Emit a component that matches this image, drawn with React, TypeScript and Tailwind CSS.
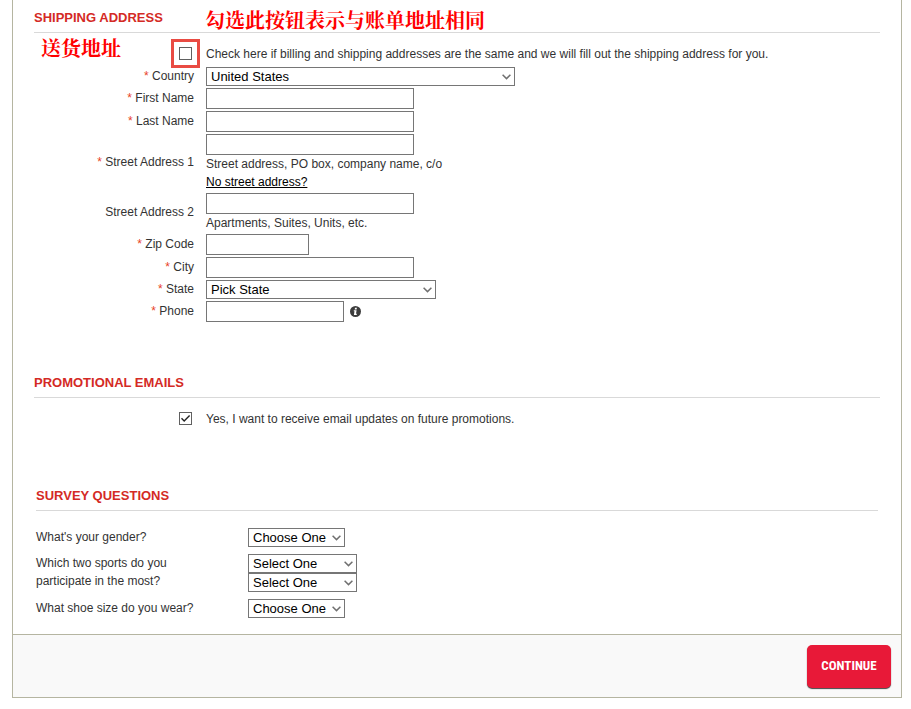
import { useState } from "react";

const inputClass = "h-[21px] border border-[#767676] bg-white px-1 text-[13px] text-black rounded-none focus:outline-none focus:border-black";
const headingClass = "border-b border-[#d9d9d9] pb-[5px] text-[13px] leading-[18px] font-bold text-[#d42a25]";
const noteClass = "absolute font-['Noto_Serif_CJK_SC','Noto_Sans_CJK_SC',serif] text-[20px] leading-6 font-bold whitespace-nowrap text-[#f00]";

function Select({ id, label, options, className }: { id: string; label?: string; options: string[]; className: string }) {
  return (
    <div className={`relative max-w-full ${className}`}>
      <select
        id={id}
        aria-label={label}
        className="block h-[19px] w-full appearance-none border border-[#767676] bg-white pl-1 text-[13px] leading-[17px] text-black"
      >
        {options.map((o) => (
          <option key={o}>{o}</option>
        ))}
      </select>
      <svg className="pointer-events-none absolute top-[7px] right-1 h-[6px] w-[9px]" viewBox="0 0 9 6" fill="none" stroke="#707070" strokeWidth={1.5}>
        <path d="M0.6 0.8L4.5 4.6L8.4 0.8" />
      </svg>
    </div>
  );
}

function Checkbox({ id, checked, onChange }: { id: string; checked: boolean; onChange: (v: boolean) => void }) {
  return (
    <span className="relative block h-[13px] w-[13px]">
      <input
        id={id}
        type="checkbox"
        checked={checked}
        onChange={(e) => onChange(e.target.checked)}
        className="block h-[13px] w-[13px] appearance-none border border-[#606060] bg-white"
      />
      {checked && (
        <svg className="pointer-events-none absolute inset-0 h-[13px] w-[13px]" viewBox="0 0 13 13" fill="none" stroke="#222" strokeWidth={1.4}>
          <path d="M2.5 6.3L5.2 9L10.6 3.6" />
        </svg>
      )}
    </span>
  );
}

function Row({ id, label, required = true, children }: { id: string; label: string; required?: boolean; children: React.ReactNode }) {
  return (
    <div className="flex items-center gap-3">
      <label htmlFor={id} className="-my-1 w-40 shrink-0 pb-[2px] text-right">
        {required && <span className="text-[#e8421f]">* </span>}
        {label}
      </label>
      <div className="min-w-0 flex-1">{children}</div>
    </div>
  );
}

export default function App() {
  const [same, setSame] = useState(false);
  const [promo, setPromo] = useState(true);

  return (
    <div className="bg-white pr-[9px] pb-[11px] pl-3 font-['Liberation_Sans',Arial,sans-serif] text-[12px] leading-[18px] text-[#333]">
      <form onSubmit={(e) => e.preventDefault()} className="border-x border-b border-[#b5b5a1]">
        {/* Shipping */}
        <section className="relative px-[21px] pt-[9px]">
          <h2 className={headingClass}>SHIPPING ADDRESS</h2>
          <div className={`${noteClass} top-2 left-48`}>勾选此按钮表示与账单地址相同</div>
          <div className={`${noteClass} top-9 left-7`}>送货地址</div>

          <div className="flex items-center gap-[14px] pt-3 pb-1">
            <div className="relative mb-px ml-[145px]">
              <Checkbox id="same" checked={same} onChange={setSame} />
              <span className="pointer-events-none absolute -inset-2 border-3 border-[#e94b43]" />
            </div>
            <label htmlFor="same">
              Check here if billing and shipping addresses are the same and we will fill out the shipping address for you.
            </label>
          </div>

          <div className="flex flex-col gap-[2px]">
            <Row id="country" label="Country">
              <Select id="country" className="w-[309px]" options={["United States", "Canada"]} />
            </Row>
            <Row id="first" label="First Name">
              <input id="first" type="text" className={`${inputClass} block w-[208px]`} />
            </Row>
            <Row id="last" label="Last Name">
              <input id="last" type="text" className={`${inputClass} block w-[208px]`} />
            </Row>
            <Row id="street1" label="Street Address 1">
              <input id="street1" type="text" className={`${inputClass} block w-[208px]`} />
              <p>Street address, PO box, company name, c/o</p>
              <a href="#street" className="block w-fit text-black underline">No street address?</a>
            </Row>
            <Row id="street2" label="Street Address 2" required={false}>
              <input id="street2" type="text" className={`${inputClass} block w-[208px]`} />
              <p>Apartments, Suites, Units, etc.</p>
            </Row>
            <Row id="zip" label="Zip Code">
              <input id="zip" type="text" className={`${inputClass} block w-[103px]`} />
            </Row>
            <Row id="city" label="City">
              <input id="city" type="text" className={`${inputClass} block w-[208px]`} />
            </Row>
            <Row id="state" label="State">
              <Select id="state" className="w-[230px]" options={["Pick State", "Alabama", "Alaska"]} />
            </Row>
            <Row id="phone" label="Phone">
              <div className="flex items-center gap-[6px]">
                <input id="phone" type="tel" className={`${inputClass} block w-[138px]`} />
                <svg className="h-[11px] w-[11px]" viewBox="0 0 11 11">
                  <circle cx="5.5" cy="5.5" r="5.5" fill="#3c3c3c" />
                  <path d="M5 1.7H6.9L6.6 3.4H4.7ZM3.9 4.2H6.6L6 7.8H6.9L6.7 9.1H3.9L4.5 5.3H3.7Z" fill="#fff" />
                </svg>
              </div>
            </Row>
          </div>
        </section>

        {/* Promotional emails */}
        <section className="px-[21px] pt-[52px]">
          <h2 className={headingClass}>PROMOTIONAL EMAILS</h2>
          <div className="flex items-center gap-[14px] pt-3">
            <div className="mb-px ml-[145px]">
              <Checkbox id="promo" checked={promo} onChange={setPromo} />
            </div>
            <label htmlFor="promo">Yes, I want to receive email updates on future promotions.</label>
          </div>
        </section>

        {/* Survey */}
        <section className="px-[23px] pt-[59px] pb-4">
          <h2 className={headingClass}>SURVEY QUESTIONS</h2>
          <div className="mt-[17px] flex flex-col gap-[7px]">
            <div className="flex">
              <label htmlFor="gender" className="w-[212px]">What's your gender?</label>
              <Select id="gender" className="w-[97px]" options={["Choose One", "Female", "Male"]} />
            </div>
            <div className="flex">
              <label htmlFor="sport1" className="w-[212px] pr-[60px]">Which two sports do you participate in the most?</label>
              <div className="w-[109px]">
                <Select id="sport1" className="w-full" options={["Select One", "Running", "Soccer"]} />
                <Select id="sport2" label="Second sport" className="w-full" options={["Select One", "Running", "Soccer"]} />
              </div>
            </div>
            <div className="flex">
              <label htmlFor="shoe" className="w-[212px]">What shoe size do you wear?</label>
              <Select id="shoe" className="w-[97px]" options={["Choose One", "8", "9", "10"]} />
            </div>
          </div>
        </section>

        {/* Footer */}
        <div className="flex justify-end border-t border-[#b5b5a1] bg-[#f9f9f9] px-[10px] pt-[10px] pb-[9px]">
          <button
            type="submit"
            className="h-[43px] w-[84px] rounded-[5px] bg-[#e81938] pb-[2px] font-['Roboto_Condensed','Open_Sans_Condensed',Roboto,sans-serif] text-[13px] font-bold text-white shadow-[0_1px_1px_#444]"
          >
            CONTINUE
          </button>
        </div>
      </form>
    </div>
  );
}
